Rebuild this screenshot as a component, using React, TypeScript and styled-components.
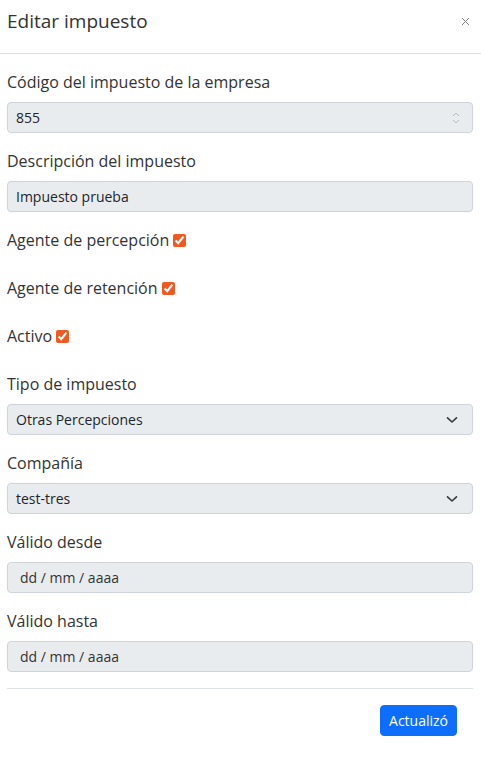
import React from "react";
import styled, { createGlobalStyle } from "styled-components";

const Global = createGlobalStyle`
  html, body { margin: 0; padding: 0; background: #fff; }
  body {
    font-family: "Open Sans", "Noto Sans", sans-serif;
    color: #212529;
    -webkit-font-smoothing: antialiased;
  }
  * { box-sizing: border-box; }
`;

const Modal = styled.div`
  width: 481px;
  background: #fff;
`;

const Header = styled.div`
  display: flex;
  align-items: flex-start;
  justify-content: space-between;
  padding: 6px 8px 17px 7px;
  border-bottom: 1px solid #dee2e6;
`;

const Title = styled.h5`
  margin: 0;
  font-size: 19px;
  font-weight: 400;
  line-height: 30px;
  color: #333;
`;

const Close = styled.button`
  border: 0;
  background: transparent;
  padding: 0;
  width: 16px;
  height: 30px;
  display: flex;
  align-items: center;
  justify-content: center;
  opacity: 0.5;
  cursor: pointer;
`;

const Body = styled.form`
  padding: 16px 8px 0 7px;
  display: flex;
  flex-direction: column;
`;

const Field = styled.div<{ $gap?: number }>`
  display: flex;
  flex-direction: column;
  margin-bottom: ${(p) => p.$gap ?? 16}px;
`;

const Label = styled.label`
  font-size: 16px;
  line-height: 24px;
  color: #333;
  margin-bottom: 8px;
`;

const CheckRow = styled.label`
  display: flex;
  align-items: center;
  font-size: 16px;
  line-height: 24px;
  color: #333;
  margin-bottom: 24px;
`;

const Check = styled.input`
  accent-color: #f05a22;
  width: 13px;
  height: 13px;
  margin: 0 0 0 4px;
`;

const Control = styled.div`
  position: relative;
  height: 31px;
  border: 1px solid #ced4da;
  border-radius: 4px;
  background: #e9ecef;
  display: flex;
  align-items: center;
  padding: 0 8px;
  font-size: 14px;
  line-height: 21px;
  color: #212529;
`;

const DateText = styled.span`
  padding-left: 4px;
  color: #333;
`;

const TrailIcon = styled.span<{ $right?: number }>`
  position: absolute;
  right: ${(p) => p.$right ?? 14}px;
  top: 50%;
  transform: translateY(-50%);
  display: flex;
`;

const Divider = styled.hr`
  margin: 0;
  border: 0;
  border-top: 1px solid #dee2e6;
`;

const Footer = styled.div`
  display: flex;
  justify-content: flex-end;
  padding: 16px 24px 28px;
`;

const Button = styled.button`
  background: #0d6efd;
  border: 1px solid #0d6efd;
  color: #fff;
  border-radius: 4px;
  height: 31px;
  padding: 0 8px;
  font-family: inherit;
  font-size: 14px;
  line-height: 21px;
`;

const Chevron = () => (
  <svg width="12" height="8" viewBox="0 0 12 8">
    <path d="M1.5 1.8 L6 6 L10.5 1.8" fill="none" stroke="#343a40" strokeWidth="1.6" strokeLinecap="round" strokeLinejoin="round" />
  </svg>
);

const Spinner = () => (
  <svg width="8" height="14" viewBox="0 0 8 14">
    <path d="M1 5 L4 2 L7 5" fill="none" stroke="#b7bcc1" strokeWidth="1" />
    <path d="M1 9 L4 12 L7 9" fill="none" stroke="#b7bcc1" strokeWidth="1" />
  </svg>
);

export default function App() {
  return (
    <>
      <Global />
      <Modal>
        <Header>
          <Title>Editar impuesto</Title>
          <Close aria-label="Cerrar">
            <svg width="9" height="9" viewBox="0 0 9 9">
              <path d="M1 1 L8 8 M8 1 L1 8" stroke="#000" strokeWidth="1" />
            </svg>
          </Close>
        </Header>
        <Body>
          <Field>
            <Label>Código del impuesto de la empresa</Label>
            <Control>
              855
              <TrailIcon $right={12}>
                <Spinner />
              </TrailIcon>
            </Control>
          </Field>
          <Field>
            <Label>Descripción del impuesto</Label>
            <Control>Impuesto prueba</Control>
          </Field>
          <CheckRow>
            Agente de percepción <Check type="checkbox" defaultChecked />
          </CheckRow>
          <CheckRow>
            Agente de retención <Check type="checkbox" defaultChecked />
          </CheckRow>
          <CheckRow>
            Activo <Check type="checkbox" defaultChecked />
          </CheckRow>
          <Field>
            <Label>Tipo de impuesto</Label>
            <Control>
              Otras Percepciones
              <TrailIcon>
                <Chevron />
              </TrailIcon>
            </Control>
          </Field>
          <Field>
            <Label>Compañía</Label>
            <Control>
              test-tres
              <TrailIcon>
                <Chevron />
              </TrailIcon>
            </Control>
          </Field>
          <Field>
            <Label>Válido desde</Label>
            <Control>
              <DateText>dd / mm / aaaa</DateText>
            </Control>
          </Field>
          <Field>
            <Label>Válido hasta</Label>
            <Control>
              <DateText>dd / mm / aaaa</DateText>
            </Control>
          </Field>
          <Divider />
        </Body>
        <Footer>
          <Button type="button">Actualizó</Button>
        </Footer>
      </Modal>
    </>
  );
}
